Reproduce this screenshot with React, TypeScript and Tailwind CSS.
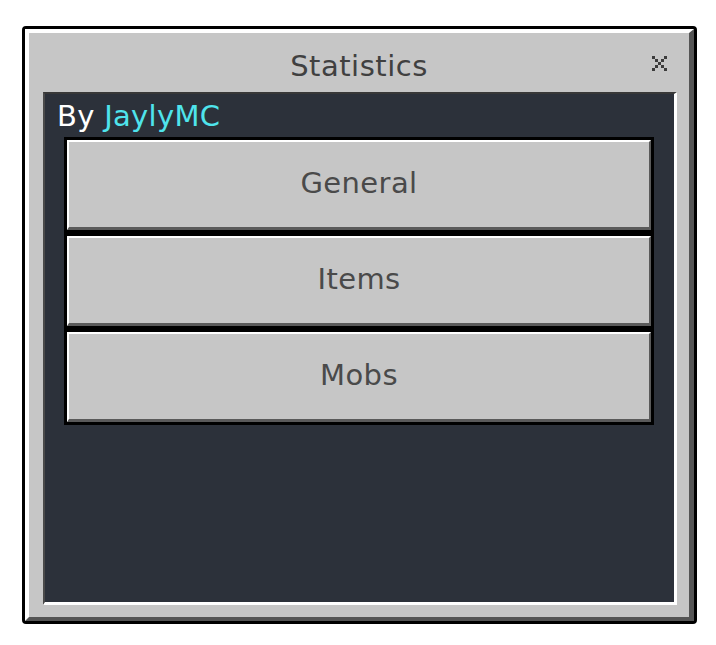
import React from 'react';

const font = { fontFamily: '"DejaVu Sans", "Liberation Sans", sans-serif' };

// Tiny pixel-grid close glyph
function CloseGlyph() {
  const cells = [
    [0, 0], [4, 0], [1, 1], [3, 1], [2, 2], [1, 3], [3, 3], [0, 4], [4, 4],
  ];
  return (
    <svg width="15" height="15" viewBox="0 0 15 15" shapeRendering="crispEdges">
      {cells.map(([x, y]) => (
        <rect key={`${x}-${y}`} x={x * 3} y={y * 3} width="3" height="3" fill="#3c3c3c" />
      ))}
    </svg>
  );
}

function MenuButton({ label }: { label: string }) {
  return (
    <div className="h-[96px] border-[3px] border-black bg-[#c6c6c6]">
      <div className="flex h-full items-center justify-center border-t-2 border-l-2 border-b-[3px] border-r-2 border-t-white border-l-white border-b-[#5a5a5a] border-r-[#5a5a5a] pb-[3px]">
        <span className="text-[29px] leading-[29px] tracking-[0.4px] text-[#4a4a4a]" style={font}>
          {label}
        </span>
      </div>
    </div>
  );
}

export default function App() {
  const sections = ['General', 'Items', 'Mobs'];

  return (
    <div className="min-h-[645px] w-[716px] bg-white pl-[22px] pt-[26px]">
      <div className="h-[598px] w-[675px] rounded-[4px] border-[3px] border-black">
        <div className="flex h-full flex-col border-t-4 border-l-4 border-b-4 border-r-[5px] border-t-white border-l-white border-b-[#555555] border-r-[#555555] bg-[#c6c6c6]">
          {/* title bar */}
          <div className="relative h-[59px] shrink-0 pt-[19px] text-center">
            <span className="text-[29px] leading-[29px] tracking-[0.5px] text-[#404040]" style={font}>
              Statistics
            </span>
            <button className="absolute right-[22px] top-[23px]">
              <CloseGlyph />
            </button>
          </div>

          {/* content well */}
          <div className="mb-[12px] ml-[14px] mr-[12px] flex-1 border-t-2 border-l-2 border-b-[3px] border-r-[3px] border-t-[#383838] border-l-[#4a4a4a] border-b-white border-r-white bg-[#2c313a] pl-[12px] pt-[8px]">
            <div className="text-[29px] leading-[29px] tracking-[0.3px]" style={font}>
              <span className="text-white">By </span>
              <span className="text-[#4fe4ec]">JaylyMC</span>
            </div>
            <div className="ml-[7px] mr-[20px] mt-[6px] flex flex-col">
              {sections.map((s) => (
                <MenuButton key={s} label={s} />
              ))}
            </div>
          </div>
        </div>
      </div>
    </div>
  );
}
